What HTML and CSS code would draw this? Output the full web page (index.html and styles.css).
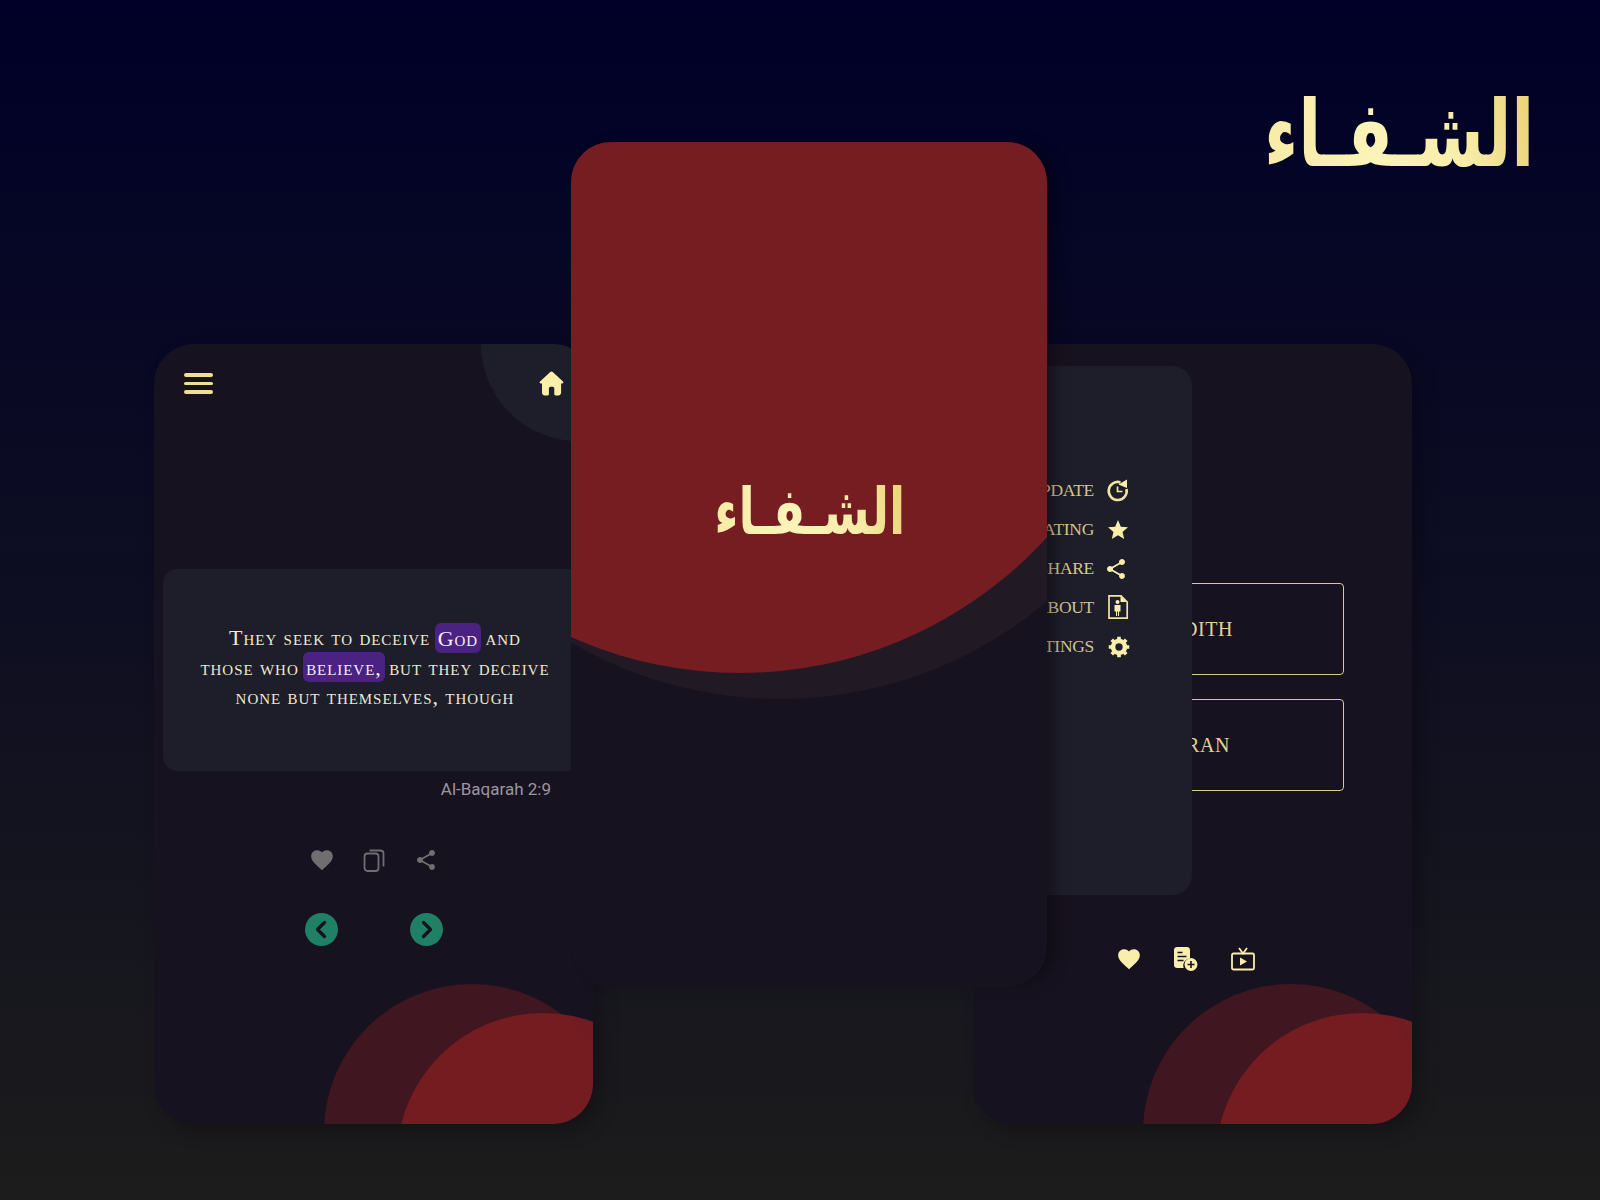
FILE: index.html
```html
<!DOCTYPE html>
<html lang="en">
<head>
<meta charset="utf-8">
<title>Al-Shifa</title>
<link rel="stylesheet" href="styles.css">
</head>
<body>
<main class="stage">
  <div class="brand logo logo-lg" lang="ar" dir="rtl">الشـفـاء</div>

  <section class="phone phone-left">
    <span class="home-disc"></span>
    <span class="blob blob-back"></span>
    <span class="blob blob-front"></span>
    <header class="topbar">
      <span class="burger"><i></i><i></i><i></i></span>
      <svg class="home" viewBox="0 0 25 25"><path d="M12.5 0.6c.5 0 .9.2 1.2.5l10.3 9.5c.8.8.3 2-.8 2h-1.1v9.2c0 1.5-1.1 2.6-2.6 2.6h-3c-.7 0-1.2-.5-1.2-1.2v-5.7c0-1-.8-1.8-1.8-1.8h-1.8c-1 0-1.8.8-1.8 1.8v5.700c0 .7-.5 1.200-1.200 1.200H5.600c-1.500 0-2.600-1.100-2.600-2.600v-9.200H1.800c-1.100 0-1.600-1.200-.8-2L11.300 1.100c.3-.3.7-.5 1.200-.5z"/></svg>
    </header>
    <div class="verse">
      <p class="verse-text">They seek to deceive <mark class="hl hl-god">God</mark> and<br>those who <mark class="hl hl-bel">believe,</mark> but they deceive<br>none but themselves, though</p>
    </div>
    <p class="ref">Al-Baqarah 2:9</p>
    <div class="actions">
      <svg class="act act-heart" viewBox="0 0 24 24"><path d="M12 21.350l-1.450-1.320C5.400 15.360 2 12.280 2 8.500 2 5.420 4.420 3 7.500 3c1.740 0 3.410.81 4.500 2.090C13.090 3.810 14.760 3 16.500 3 19.580 3 22 5.420 22 8.500c0 3.780-3.400 6.860-8.550 11.540L12 21.350z"/></svg>
      <svg class="act act-line" viewBox="0 0 24 24"><rect x="2.500" y="5.500" width="14" height="17.500" rx="3"/><path d="M7.500 2.500h11c1.700 0 3 1.300 3 3v13"/></svg>
      <svg class="act act-sm" viewBox="0 0 24 24"><path d="M18 16.080c-.76 0-1.440.3-1.960.77L8.910 12.700c.05-.23.09-.46.09-.7s-.04-.47-.09-.7l7.050-4.110c.54.5 1.250.81 2.040.81 1.660 0 3-1.340 3-3s-1.340-3-3-3-3 1.340-3 3c0 .24.04.47.09.7L8.040 9.810C7.500 9.310 6.790 9 6 9c-1.660 0-3 1.340-3 3s1.340 3 3 3c.79 0 1.500-.31 2.040-.81l7.120 4.160c-.05.21-.08.43-.08.65 0 1.610 1.310 2.920 2.920 2.920s2.920-1.310 2.920-2.920-1.310-2.920-2.920-2.920z"/></svg>
    </div>
    <div class="pager">
      <span class="nav"><svg viewBox="0 0 33 33"><path d="M19.500 9.500l-7 7 7 7"/></svg></span>
      <span class="nav"><svg viewBox="0 0 33 33"><path d="M13.500 9.500l7 7-7 7"/></svg></span>
    </div>
  </section>

  <section class="phone phone-right">
    <span class="blob blob-back"></span>
    <span class="blob blob-front"></span>
    <div class="choices">
      <button class="choice">HADITH</button>
      <button class="choice">QURAN</button>
    </div>
    <div class="tools">
      <svg class="tool tool-heart" viewBox="0 0 24 24"><path d="M12 21.350l-1.450-1.320C5.400 15.360 2 12.280 2 8.500 2 5.420 4.420 3 7.500 3c1.740 0 3.410.81 4.500 2.090C13.090 3.810 14.760 3 16.500 3 19.580 3 22 5.420 22 8.500c0 3.780-3.400 6.860-8.550 11.540L12 21.350z"/></svg>
      <svg class="tool tool-note" viewBox="0 0 24 24"><path d="M3 0h10c1.700 0 3 1.300 3 3v8.500a7 7 0 0 0-6.300 9.500H3c-1.700 0-3-1.300-3-3V3c0-1.700 1.300-3 3-3z"/><path class="cut" d="M3.500 5.500h5M3.500 9.500h9M3.500 13.500h6"/><circle cx="17" cy="17.500" r="6.500"/><path class="cut" d="M17 14v7M13.500 17.500h7"/></svg>
      <svg class="tool tool-tv" viewBox="0 0 24 24"><rect x="1" y="6.500" width="22" height="16" rx="1.500"/><path d="M8 1l4 5.500L16 1"/><path class="solid" d="M9 10.500l7 4-7 4z"/></svg>
    </div>
    <nav class="drawer">
      <a class="item"><span class="item-label">UPDATE</span><svg class="item-ico" viewBox="0 0 24 24"><path class="ln" d="M20.500 10A9 9 0 1 1 14.500 3.400"/><path class="ln thin" d="M11.500 7.500v5h5"/><path class="sol" d="M12.500 5.500l8.500-5v8.500z"/></svg></a>
      <a class="item"><span class="item-label">RATING</span><svg class="item-ico" viewBox="0 0 24 24"><path class="sol" d="M12 17.270L18.180 21l-1.640-7.030L22 9.240l-7.190-.61L12 2 9.190 8.630 2 9.240l5.460 4.730L5.820 21z"/></svg></a>
      <a class="item"><span class="item-label">SHARE</span><svg class="item-ico ico-share" viewBox="0 0 24 24"><path class="sol" d="M18 16.080c-.76 0-1.440.3-1.960.77L8.910 12.700c.05-.23.09-.46.09-.7s-.04-.47-.09-.7l7.050-4.110c.54.5 1.250.81 2.040.81 1.660 0 3-1.340 3-3s-1.340-3-3-3-3 1.340-3 3c0 .24.04.47.09.7L8.040 9.810C7.500 9.310 6.790 9 6 9c-1.660 0-3 1.340-3 3s1.340 3 3 3c.79 0 1.500-.31 2.040-.81l7.120 4.160c-.05.21-.08.43-.08.65 0 1.610 1.310 2.920 2.920 2.920s2.920-1.310 2.920-2.920-1.310-2.920-2.920-2.920z"/></svg></a>
      <a class="item"><span class="item-label">ABOUT</span><svg class="item-ico ico-about" viewBox="0 0 24 24"><path class="ln thin" d="M3 .8h12l6.200 6.200v16.200H3z"/><path class="sol" d="M14.500 1l6 6h-6z"/><circle class="sol" cx="11.500" cy="7" r="2"/><path class="sol" d="M8.500 10h6v6.500h-1.500V21h-1v-4.500h-1V21h-1v-4.500H8.500z"/></svg></a>
      <a class="item"><span class="item-label">SETTINGS</span><svg class="item-ico ico-gear" viewBox="0 0 24 24"><circle class="ln bold" cx="12" cy="12" r="6.500"/><path class="ln teeth" d="M12 .8v4M12 19.200v4M.8 12h4M19.200 12h4M4.100 4.100l2.800 2.800M17.100 17.100l2.800 2.800M4.100 19.900l2.800-2.800M17.100 6.900l2.800-2.800"/></svg></a>
    </nav>
  </section>

  <section class="splash">
    <span class="wave wave-back"></span>
    <span class="wave wave-front"></span>
    <div class="logo logo-sm" lang="ar" dir="rtl">الشـفـاء</div>
  </section>
</main>
</body>
</html>
```
FILE: styles.css
```css
* { box-sizing: border-box; }
html, body { margin: 0; height: 1200px; overflow: hidden; }
body { background: linear-gradient(180deg, #000028 0%, #1c1c1c 100%); font-family: "Liberation Serif", serif; }
.stage { position: relative; width: 1600px; height: 1200px; }

.logo {
  font-family: "DejaVu Sans", sans-serif;
  font-weight: 700;
  line-height: 1.2;
  padding: 0 4px;
  white-space: nowrap;
  background: linear-gradient(255deg, #e9cf72 0%, #f8eeaa 30%, #fbf3b8 60%, #f8eaa4 100%);
  -webkit-background-clip: text;
  background-clip: text;
  color: transparent;
  transform: scaleX(.73);
  transform-origin: center;
}
.brand { position: absolute; left: 1210px; top: 80px; }
.logo-lg { font-size: 92px; }
.logo-sm { font-size: 65px; position: relative; left: 1px; }

.phone {
  position: absolute;
  top: 344px;
  width: 439px;
  height: 780px;
  border-radius: 40px;
  background: #17121f;
  overflow: hidden;
  box-shadow: 8px 8px 18px rgba(0,0,0,.25);
}
.phone-left { left: 154px; }
.phone-right { left: 973px; }

.blob { position: absolute; border-radius: 50%; }
.blob-back { left: 170px; top: 640px; width: 296px; height: 296px; background: rgba(122,29,34,.42); }
.blob-front { left: 243px; top: 669px; width: 292px; height: 292px; background: rgba(122,29,34,.92); }
.home-disc { position: absolute; left: 327px; top: -97px; width: 194px; height: 194px; border-radius: 50%; background: #1e1d2a; }

.topbar { position: relative; display: flex; justify-content: space-between; align-items: center; height: 25px; margin: 27px 29px 0 30px; }
.burger { display: flex; flex-direction: column; gap: 5px; width: 29px; }
.burger i { display: block; height: 3.500px; border-radius: 2px; background: #f2df8e; }
.home { width: 25px; height: 25px; fill: #f9eeaa; }

.verse { position: relative; margin: 173px 8px 0 9px; height: 202px; padding: 54px 0 0 2px; border-radius: 14px; background: #1e1d2a; }
.verse-text { margin: 0; text-align: center; font-size: 22px; line-height: 29.500px; font-variant: small-caps; letter-spacing: .95px; color: #efe9d0; }
.hl { border-radius: 6px; background: #4b2181; color: #f3eefc; padding: 2.500px 3px; margin: 0 -2px; }

.ref { position: relative; margin: 7px 42px 0 0; text-align: right; font: 17px/22px Roboto, sans-serif; color: #99979f; }

.actions { position: relative; display: flex; justify-content: center; align-items: center; gap: 28px; margin-top: 48px; height: 24px; }
.act { width: 24px; height: 24px; fill: #6f6e70; }
.act-heart { width: 26px; height: 26px; margin: 0 -1px; }
.act-line { fill: none; stroke: #6f6e70; stroke-width: 1.800px; }

.pager { position: relative; display: flex; justify-content: center; gap: 72px; margin-top: 41px; padding-left: 1px; }
.nav { width: 33px; height: 33px; border-radius: 50%; background: #1f8066; }
.nav svg { display: block; width: 33px; height: 33px; fill: none; stroke: #17121f; stroke-width: 3.200px; stroke-linecap: round; stroke-linejoin: round; }

.choices { display: flex; flex-direction: column; gap: 24px; padding: 239px 68px 0 69px; }
.choice { height: 92px; padding-top: 2px; background: transparent; border: 1px solid #d9c98c; border-radius: 4px; font: 20px "Liberation Serif", serif; letter-spacing: .6px; color: #e0d297; }

.tools { position: relative; display: flex; justify-content: center; align-items: center; gap: 33px; margin-top: 156px; height: 24px; padding-right: 13px; }
.tool { width: 24px; height: 24px; }
.tool-heart { width: 26px; height: 26px; margin: 0 -1px; fill: #f9eeaa; }
.tool-note { fill: #f9eeaa; }
.tool-note .cut { fill: none; stroke: #17121f; stroke-width: 1.600px; }
.tool-tv { fill: none; stroke: #f9eeaa; stroke-width: 1.800px; }
.tool-tv .solid { fill: #f9eeaa; stroke: none; }

.drawer { position: absolute; left: 0; top: 22px; width: 219px; height: 529px; padding: 105px 62px 0 0; display: flex; flex-direction: column; align-items: flex-end; border-radius: 0 20px 20px 0; background: #1e1d2a; }
.item { display: flex; align-items: center; justify-content: flex-end; gap: 12px; height: 39px; white-space: nowrap; }
.item-label { font-size: 17.500px; letter-spacing: -.3px; color: #d4c590; }
.item-ico { width: 24px; height: 24px; }
.ico-share { transform: translateX(-2px); }
.ico-about { transform: translateY(-1px); }
.ico-gear { width: 22px; height: 22px; margin: 0 1px; transform: translateX(1px); }
.sol { fill: #f9eeaa; }
.ln { fill: none; stroke: #f2e3a0; stroke-width: 2.600px; }
.thin { stroke-width: 1.700px; }
.bold { stroke-width: 5px; stroke: #f9eeaa; }
.teeth { stroke-width: 4px; stroke: #f9eeaa; }

.splash { position: absolute; left: 571px; top: 142px; width: 476px; height: 845px; border-radius: 40px; background: #17121f; overflow: hidden; box-shadow: 12px 0 18px -6px rgba(0,0,0,.4); display: flex; justify-content: center; align-items: flex-start; padding-top: 331px; }
.wave { position: absolute; width: 830px; height: 830px; border-radius: 50%; }
.wave-back { left: -206px; top: -273px; background: #211923; }
.wave-front { left: -246px; top: -299px; background: #761d22; }
```
